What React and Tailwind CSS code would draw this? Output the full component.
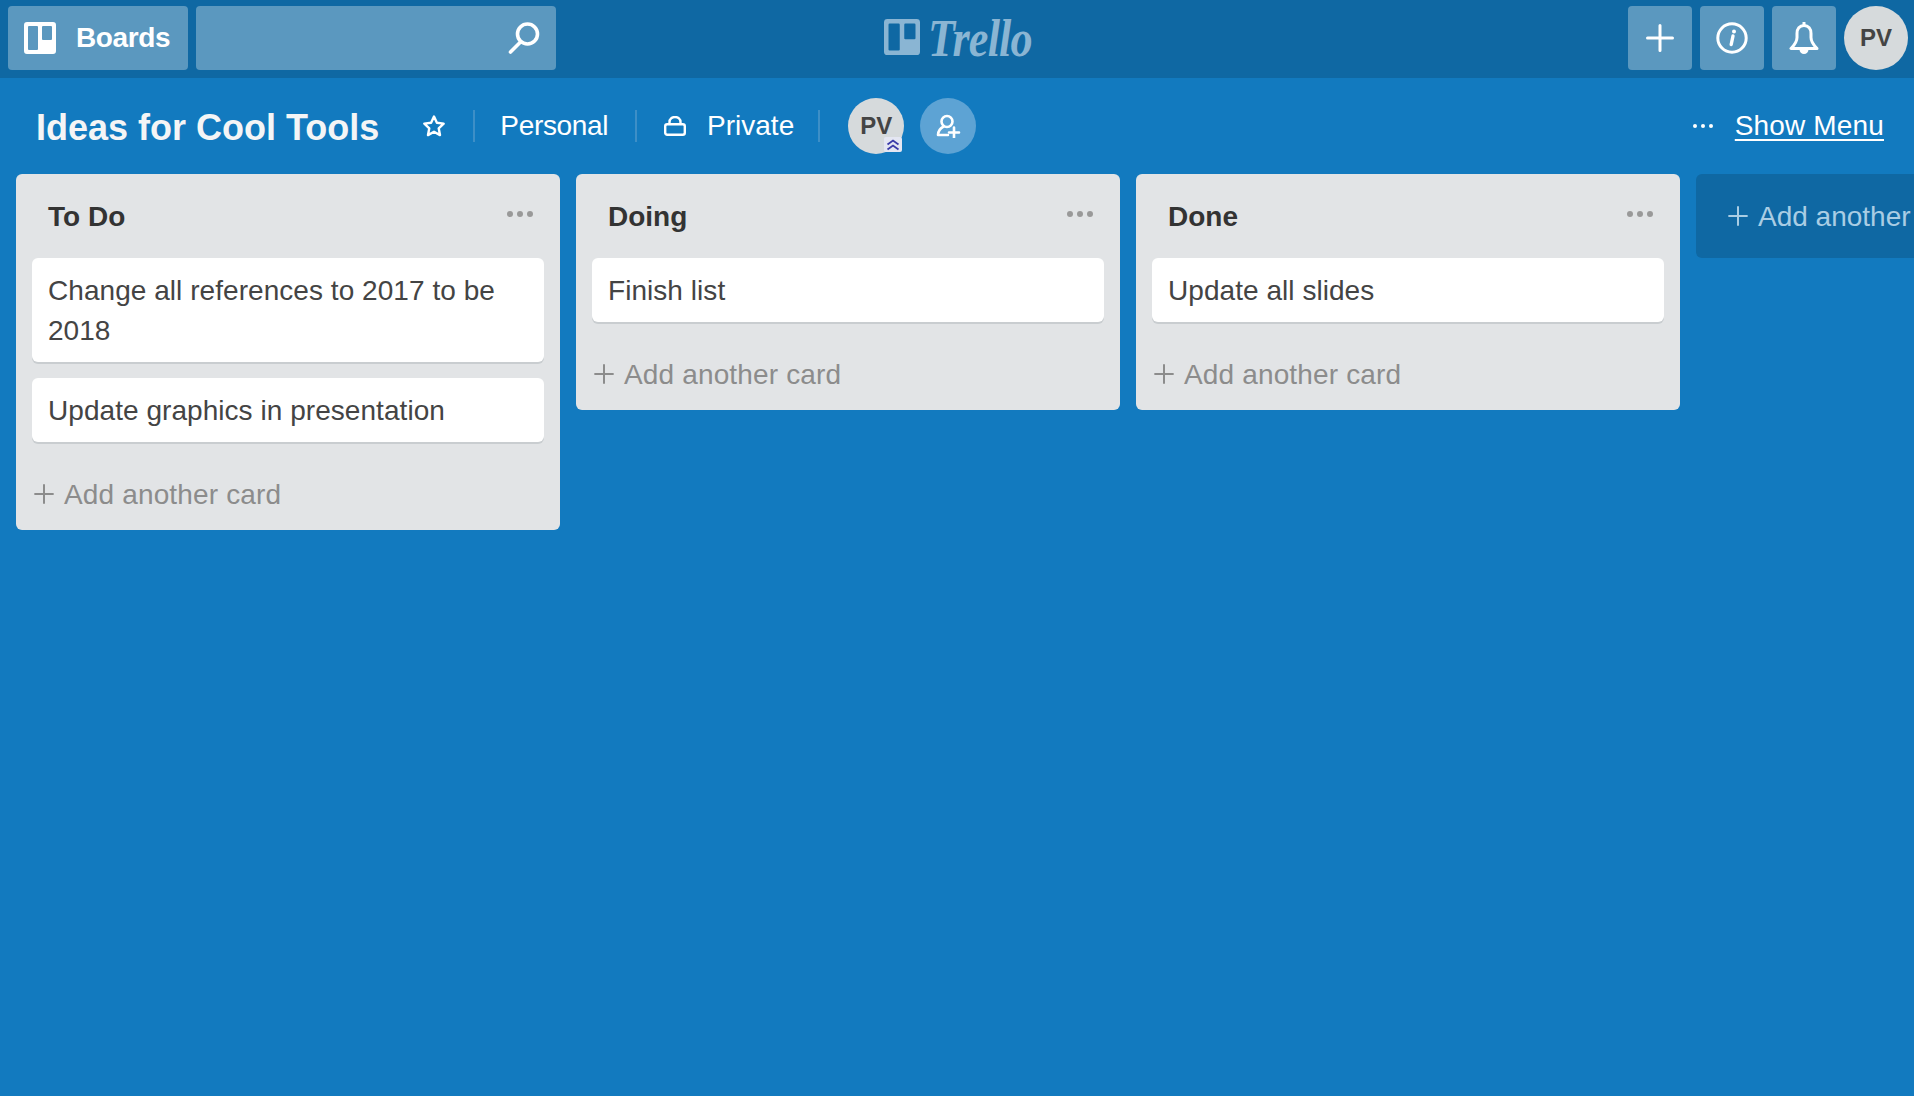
import React from "react";

const LISTS = [
  { title: "To Do", cards: ["Change all references to 2017 to be 2018", "Update graphics in presentation"] },
  { title: "Doing", cards: ["Finish list"] },
  { title: "Done", cards: ["Update all slides"] },
];

function BoardsIcon({ className }) {
  return (
    <svg viewBox="0 0 32 32" className={className}>
      <path
        fill="currentColor"
        fillRule="evenodd"
        d="M3 0h26a3 3 0 0 1 3 3v26a3 3 0 0 1-3 3H3a3 3 0 0 1-3-3V3a3 3 0 0 1 3-3zm2 4a1 1 0 0 0-1 1v22a1 1 0 0 0 1 1h8a1 1 0 0 0 1-1V5a1 1 0 0 0-1-1H5zm14 0a1 1 0 0 0-1 1v12a1 1 0 0 0 1 1h8a1 1 0 0 0 1-1V5a1 1 0 0 0-1-1h-8z"
      />
    </svg>
  );
}

function PlusIcon({ className, width = 3 }) {
  return (
    <svg viewBox="0 0 28 28" className={className} fill="none" stroke="currentColor" strokeWidth={width} strokeLinecap="round">
      <path d="M14 1.5v25M1.5 14h25" />
    </svg>
  );
}

function SearchIcon() {
  return (
    <svg viewBox="0 0 32 32" className="w-8 h-8 text-white" fill="none" stroke="currentColor" strokeWidth="3.6" strokeLinecap="round">
      <circle cx="19.5" cy="12" r="10" />
      <path d="M12.5 20 2.5 30" />
    </svg>
  );
}

function InfoIcon() {
  return (
    <svg viewBox="0 0 32 32" className="w-8 h-8 text-white" fill="none" stroke="currentColor" strokeWidth="3">
      <circle cx="16" cy="16" r="14.2" />
      <path d="M17 14l-1.800 8.500" strokeLinecap="round" strokeWidth="3.400" />
      <circle cx="18" cy="9.400" r="2" fill="currentColor" stroke="none" />
    </svg>
  );
}

function BellIcon() {
  return (
    <svg viewBox="0 0 30 32" className="w-[30px] h-8 text-white" fill="none" stroke="currentColor" strokeWidth="3" strokeLinejoin="round">
      <path d="M15 3.500c-4.500 0-7 3.500-7 8v4c0 4-2 7-6 11h26c-4-4-6-7-6-11v-4c0-4.500-2.500-8-7-8z" />
      <path d="M15 0.800v2.500" strokeLinecap="round" />
      <path d="M12 27.500a3 3 0 0 0 6 0z" fill="currentColor" />
    </svg>
  );
}

function StarIcon() {
  return (
    <svg viewBox="0 0 24 24" className="w-6 h-6 text-white" fill="none" stroke="currentColor" strokeWidth="2.400" strokeLinejoin="round">
      <path d="M12 2.500l2.900 6.300 6.800.8-5 4.700 1.300 6.800L12 17.700l-6 3.400 1.300-6.800-5-4.700 6.800-.8z" />
    </svg>
  );
}

function LockIcon() {
  return (
    <svg viewBox="0 0 22 20" className="w-[22px] h-5 text-white" fill="none" stroke="currentColor" strokeWidth="2.400">
      <rect x="1.200" y="8.200" width="19.600" height="10.600" rx="2" />
      <path d="M5.500 8V6a5.500 5 0 0 1 11 0v2" />
    </svg>
  );
}

function AddMemberIcon() {
  return (
    <svg viewBox="0 0 26 24" className="w-[26px] h-6 text-white" fill="none" stroke="currentColor" strokeWidth="2.600" strokeLinecap="round" strokeLinejoin="round">
      <circle cx="12" cy="7.500" r="5.500" />
      <path d="M8.500 12.500C5 14.500 3 17.500 3 21h10" />
      <path d="M19 13.500v10M14 18.500h10" />
    </svg>
  );
}

function Dots({ className }) {
  return (
    <div className={`flex gap-[4px] ${className}`}>
      <span className="w-[6px] h-[6px] rounded-full bg-current" />
      <span className="w-[6px] h-[6px] rounded-full bg-current" />
      <span className="w-[6px] h-[6px] rounded-full bg-current" />
    </div>
  );
}

function Avatar({ size, children }) {
  return (
    <div className={`${size} relative rounded-full bg-[#d6dadc] flex items-center justify-center text-[24px] font-bold text-[#444444]`}>
      PV
      {children}
    </div>
  );
}

function TopButton({ children }) {
  return <div className="w-16 h-16 rounded-[4px] bg-[#5b98bf] flex items-center justify-center">{children}</div>;
}

function Sep() {
  return <div className="w-[2px] h-8 bg-[#3d8fc7]" />;
}

function List({ title, cards }) {
  return (
    <section className="w-[544px] shrink-0 rounded-[6px] bg-[#e2e4e6]">
      <div className="h-[84px] pl-8 pr-[27px] flex items-start justify-between">
        <h2 className="text-[28px] leading-10 font-bold text-[#333333] mt-[23px]">{title}</h2>
        <Dots className="text-[#999999] mt-[37px]" />
      </div>
      <div className="px-4 flex flex-col gap-4">
        {cards.map((c) => (
          <div key={c} className="rounded-[6px] bg-white px-4 pt-[13px] pb-[11px] text-[28px] leading-10 tracking-[0.05px] text-[#444444] shadow-[0_2px_0_#c9cdd0]">
            {c}
          </div>
        ))}
      </div>
      <div className="h-[88px] pl-[18px] pt-[33px] flex items-start gap-[10px] text-[#8c8c8c]">
        <PlusIcon className="w-[20px] h-[20px] mt-[9px]" width={2.800} />
        <span className="text-[28px] leading-10 tracking-[0.15px]">Add another card</span>
      </div>
    </section>
  );
}

export default function App() {
  return (
    <div className="w-full h-[1096px] overflow-hidden bg-[#127abf] font-['Liberation_Sans',Arial,sans-serif]">
      <header className="h-[78px] bg-[#0f68a3] grid grid-cols-[1fr_auto_1fr] pt-[6px] pl-2 pr-[6px]">
        <div className="flex gap-2">
          <div className="w-[180px] h-16 rounded-[4px] bg-[#5b98bf] flex items-center pl-4 gap-[20px] text-white">
            <BoardsIcon className="w-8 h-8" />
            <span className="text-[28px] font-bold tracking-[-0.4px]">Boards</span>
          </div>
          <div className="w-[360px] h-16 rounded-[4px] bg-[#5b98bf] flex items-center justify-end pr-4">
            <SearchIcon />
          </div>
        </div>
        <div className="flex items-start pt-[13px] gap-2 text-[#8ab5d3]">
          <BoardsIcon className="w-9 h-9" />
          <span className="font-['Liberation_Serif',serif] italic font-bold text-[52px] leading-[46px] tracking-[-1px] -mt-[3px] scale-x-[0.85] origin-left -mr-[18px]">Trello</span>
        </div>
        <div className="flex justify-end gap-2">
          <TopButton><PlusIcon className="w-7 h-7 text-white" /></TopButton>
          <TopButton><InfoIcon /></TopButton>
          <TopButton><BellIcon /></TopButton>
          <Avatar size="w-16 h-16" />
        </div>
      </header>

      <div className="h-[96px] flex items-center pl-9 pr-[30px] text-white">
        <h1 className="text-[36px] font-bold text-[#f4f5f6] mr-[43px] pt-[3px]">Ideas for Cool Tools</h1>
        <StarIcon />
        <div className="ml-[27px] mr-[25px]"><Sep /></div>
        <span className="text-[28px] tracking-[-0.35px]">Personal</span>
        <div className="ml-[27px] mr-[27px]"><Sep /></div>
        <LockIcon />
        <span className="text-[28px] ml-[21px]">Private</span>
        <div className="ml-[24px] mr-[28px]"><Sep /></div>
        <Avatar size="w-14 h-14">
          <div className="absolute right-[2px] bottom-[2px] w-[18px] h-[15px] rounded-[2px] bg-[#e4e6f2] flex items-center justify-center">
            <svg viewBox="0 0 14 12" className="w-[14px] h-3 text-[#3a3aa8]" fill="none" stroke="currentColor" strokeWidth="1.800">
              <path d="M1.500 5.500 7 1.500l5.500 4M1.500 10.500 7 6.500l5.500 4" />
            </svg>
          </div>
        </Avatar>
        <div className="w-14 h-14 ml-4 rounded-full bg-[#5da3d4] flex items-center justify-center">
          <AddMemberIcon />
        </div>
        <div className="ml-auto flex items-center gap-[22px]">
          <div className="flex gap-[4px]">
            <span className="w-[4px] h-[4px] rounded-full bg-white" />
            <span className="w-[4px] h-[4px] rounded-full bg-white" />
            <span className="w-[4px] h-[4px] rounded-full bg-white" />
          </div>
          <span className="text-[28px] tracking-[0.15px] underline underline-offset-4">Show Menu</span>
        </div>
      </div>

      <main className="flex items-start gap-4 pl-4">
        {LISTS.map((l) => (
          <List key={l.title} title={l.title} cards={l.cards} />
        ))}
        <div className="w-[544px] shrink-0 h-[84px] rounded-[6px] bg-[#0f68a3] flex items-center pl-8 gap-[10px] text-[#a9cde4]">
          <PlusIcon className="w-[20px] h-[20px]" width={2.800} />
          <span className="text-[28px] pt-[2px]">Add another list</span>
        </div>
      </main>
    </div>
  );
}
